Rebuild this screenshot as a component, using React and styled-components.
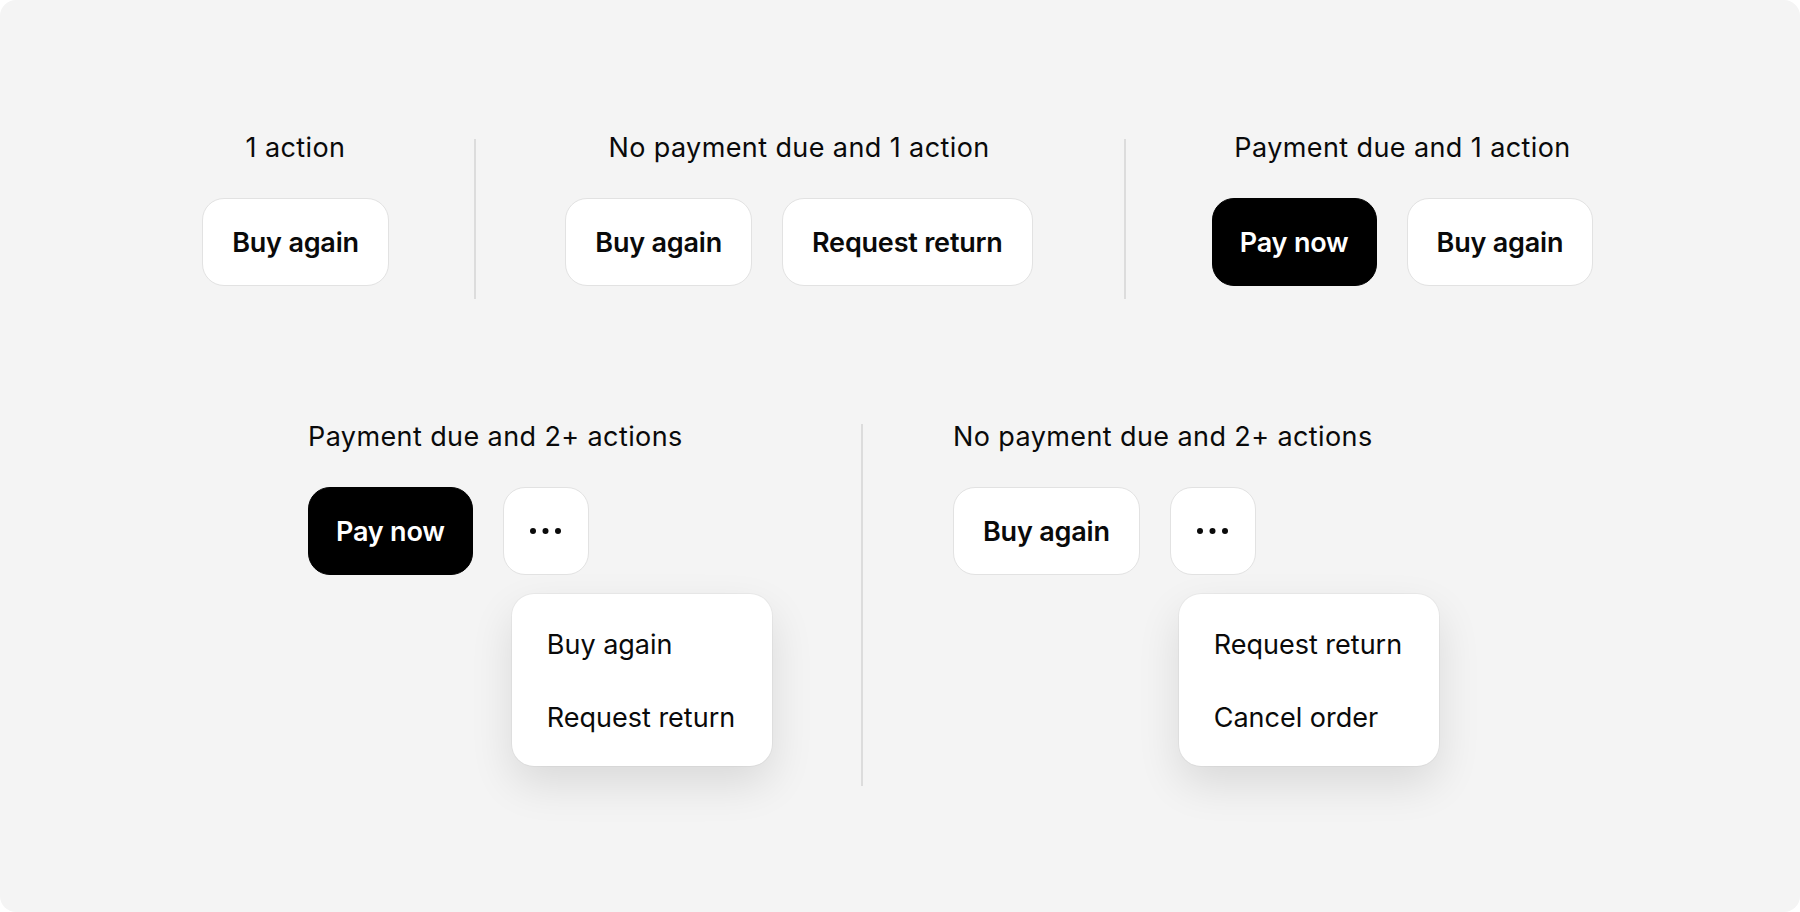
import React from 'react';
import styled, { createGlobalStyle } from 'styled-components';

const GlobalStyle = createGlobalStyle`
  * { box-sizing: border-box; }
  body {
    margin: 0;
    background: #fff;
    font-family: Inter, "Noto Sans", sans-serif;
    color: #0a0a0a;
    -webkit-font-smoothing: antialiased;
  }
`;

const Canvas = styled.div`
  width: 1800px;
  height: 912px;
  background: #f4f4f4;
  border-radius: 16px;
  display: flex;
  flex-direction: column;
  padding-top: 132px;
`;

const Row = styled.div`
  display: flex;
  align-items: flex-start;
  margin-top: ${p => p.$top || 0}px;
  padding-left: ${p => p.$left}px;
`;

const Divider = styled.div`
  flex: none;
  width: 2px;
  background: #dcdcdc;
  margin: ${p => p.$top}px ${p => p.$after}px 0 ${p => p.$before}px;
  height: ${p => p.$height}px;
`;

const Section = styled.div`
  flex: none;
  width: ${p => p.$width}px;
  display: flex;
  flex-direction: column;
  align-items: ${p => (p.$center ? 'center' : 'flex-start')};
  gap: 34px;
`;

const Label = styled.div`
  font-size: 27px;
  line-height: 32px;
  font-weight: 400;
  letter-spacing: 0.4px;
  white-space: nowrap;
`;

const Actions = styled.div`
  display: flex;
  align-items: flex-start;
  gap: 30px;
`;

const Button = styled.button`
  height: 88px;
  padding: 0 ${p => (p.$primary ? 27 : 29)}px;
  border-radius: 22px;
  border: 1.5px solid ${p => (p.$primary ? '#000' : '#e2e2e2')};
  background: ${p => (p.$primary ? '#000' : '#fff')};
  color: ${p => (p.$primary ? '#fff' : '#0a0a0a')};
  font-family: inherit;
  font-size: 27px;
  font-weight: 600;
  letter-spacing: -0.2px;
  white-space: nowrap;
  display: flex;
  align-items: center;
  justify-content: center;
`;

const MoreButton = styled(Button)`
  width: 86px;
  padding: 0;
`;

const MoreWrap = styled.div`
  display: flex;
  flex-direction: column;
  align-items: flex-start;
`;

const Menu = styled.div`
  width: 260px;
  margin: 19px 0 0 9px;
  padding: 35px 35px 32px;
  background: #fff;
  border-radius: 22px;
  box-shadow: 0 0 0 1px rgba(0, 0, 0, 0.035), 0 18px 44px rgba(0, 0, 0, 0.11);
  display: flex;
  flex-direction: column;
  gap: 41px;
`;

const MenuItem = styled.div`
  font-size: 27px;
  line-height: 32px;
  white-space: nowrap;
`;

const Dots = () => (
  <svg width="32" height="6" viewBox="0 0 32 6">
    <circle cx="3" cy="3" r="3" fill="#0a0a0a" />
    <circle cx="15.5" cy="3" r="3" fill="#0a0a0a" />
    <circle cx="28" cy="3" r="3" fill="#0a0a0a" />
  </svg>
);

const More = ({ items }) => (
  <MoreWrap>
    <MoreButton aria-label="More actions">
      <Dots />
    </MoreButton>
    <Menu>
      {items.map(item => (
        <MenuItem key={item}>{item}</MenuItem>
      ))}
    </Menu>
  </MoreWrap>
);

const App = () => {
  return (
    <>
      <GlobalStyle />
      <Canvas>
        <Row $left={203}>
          <Section $center $width={185}>
            <Label>1 action</Label>
            <Actions>
              <Button>Buy again</Button>
            </Actions>
          </Section>
          <Divider $top={7} $height={160} $before={86} $after={91} />
          <Section $center $width={464}>
            <Label>No payment due and 1 action</Label>
            <Actions>
              <Button>Buy again</Button>
              <Button>Request return</Button>
            </Actions>
          </Section>
          <Divider $top={7} $height={160} $before={93} $after={87} />
          <Section $center $width={379}>
            <Label>Payment due and 1 action</Label>
            <Actions>
              <Button $primary>Pay now</Button>
              <Button>Buy again</Button>
            </Actions>
          </Section>
        </Row>

        <Row $top={122} $left={308}>
          <Section $width={464}>
            <Label>Payment due and 2+ actions</Label>
            <Actions>
              <Button $primary>Pay now</Button>
              <More items={['Buy again', 'Request return']} />
            </Actions>
          </Section>
          <Divider $top={3} $height={362} $before={89} $after={90} />
          <Section $width={485}>
            <Label>No payment due and 2+ actions</Label>
            <Actions>
              <Button>Buy again</Button>
              <More items={['Request return', 'Cancel order']} />
            </Actions>
          </Section>
        </Row>
      </Canvas>
    </>
  );
};

export default App;
